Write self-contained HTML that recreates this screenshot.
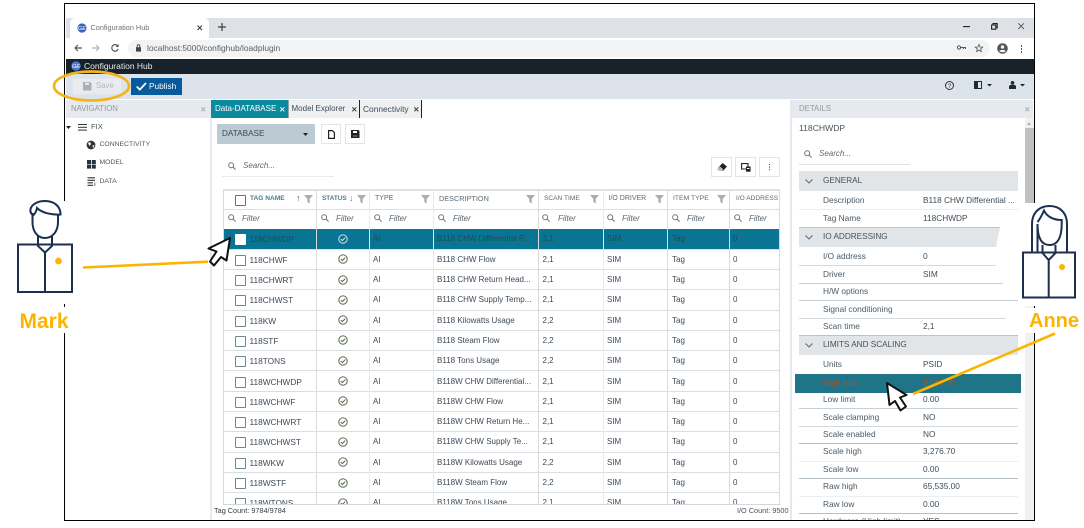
<!DOCTYPE html>
<html><head><meta charset="utf-8"><style>
html,body{margin:0;padding:0;background:#fff;width:1084px;height:528px;overflow:hidden}
body{position:relative;font-family:"Liberation Sans",sans-serif;color:#3b4650;filter:blur(.25px)}
.b{position:absolute}
.t{position:absolute;white-space:nowrap;font-size:8px;line-height:12px}
svg{position:absolute;overflow:visible}
#tbl{position:absolute;left:223px;top:189px;width:557px;height:315px;overflow:hidden;border-bottom:1px solid #d5d8db;box-sizing:content-box}
.r{position:absolute;left:0;width:557px;height:20.3px;border-bottom:1px solid #dcdfe2;box-sizing:border-box;font-size:8px;color:#3d4a57}
.r span{position:absolute;top:4px;line-height:12px;white-space:nowrap}
.r span:nth-child(1){left:12px;top:5px;width:9px;height:9px;border:1px solid #71858f;border-radius:1px;background:#fff}
.r span:nth-child(2){left:26.5px;font-size:8.3px}
.r span:nth-child(3){left:150px}
.r span:nth-child(4){left:214px}
.r span:nth-child(5){left:319.5px}
.r span:nth-child(6){left:384px}
.r span:nth-child(7){left:449px}
.r span:nth-child(8){left:510px}
.r svg{left:115px;top:4.5px}
.sel{background:#0a7592;color:#1f4a5c}
.v{position:absolute;top:0;bottom:0;width:1px;background:#d8dbde}
.h{position:absolute;font-size:7px;line-height:12px;top:5px;white-space:nowrap;color:#5b6a75}
.f{position:absolute;font-size:8px;font-style:italic;top:24px;line-height:12px;color:#5a6670}
.d{position:absolute;left:823px;font-size:8.3px;line-height:12px;color:#4a5a66;white-space:nowrap}
.e{position:absolute;left:923px;font-size:8.3px;line-height:12px;color:#3f4d58;white-space:nowrap}
.g{position:absolute;left:799px;width:219px;height:20px;background:#e2e5e8}
.gt{position:absolute;left:823px;font-size:8.2px;line-height:12px;color:#44525c;white-space:nowrap}
.l{position:absolute;left:799px;height:1px;background:#d3dbe1}
.bt{position:absolute;width:20px;height:20px;border:1px solid #e3e5e7;box-sizing:border-box;background:#fff}
</style></head><body>
<svg width="0" height="0" style="position:absolute"><defs>
<g id="chk"><circle cx="5" cy="5" r="4.2" fill="none" stroke="#4a5a3f" stroke-width=".9"/><path d="M2.8 5.1 4.4 6.6 7.2 3.6" fill="none" stroke="#4a5a3f" stroke-width=".9"/></g>
<g id="fn"><path d="M0 0H9L5.7 4V8.5L3.3 7V4Z" fill="#a8aeb2"/></g>
<g id="mg"><circle cx="3.2" cy="3.2" r="2.5" fill="none" stroke="#6c7880" stroke-width="1"/><path d="M5 5 7.6 7.6" stroke="#6c7880" stroke-width="1.1"/></g>
</defs></svg>

<!-- Frame -->
<div class="b" style="left:64px;top:3px;width:971px;height:518px;box-sizing:border-box;border:1.5px solid #000"></div>

<!-- Chrome tab bar -->
<div class="b" style="left:65.5px;top:18px;width:968px;height:20px;background:#dee1e6"></div>
<div class="b" style="left:70px;top:18px;width:139px;height:20px;background:#fff;border-radius:5px 5px 0 0"></div>
<svg style="left:77px;top:23px" width="10" height="10"><circle cx="5" cy="5" r="4.6" fill="#3a62c0"/><text x="5" y="7" font-size="5.5" fill="#fff" text-anchor="middle" font-style="italic">GE</text></svg>
<div class="t" style="left:90.5px;top:22px;font-size:7.3px;color:#6b7178">Configuration Hub</div>
<svg style="left:197px;top:25px" width="6" height="6"><path d="M.5.5 5 5M5 .5.5 5" stroke="#333" stroke-width="1"/></svg>
<svg style="left:218px;top:23px" width="8" height="8"><path d="M4 0V8M0 4H8" stroke="#444" stroke-width="1.3"/></svg>
<svg style="left:963px;top:26px" width="8" height="2"><path d="M0 .6H7" stroke="#222" stroke-width="1.1"/></svg>
<svg style="left:991px;top:23px" width="7" height="7"><path d="M.6 2H4.8V6.2H.6ZM2 2V.6H6.2V4.8H4.8" fill="none" stroke="#222" stroke-width="1.1"/></svg>
<svg style="left:1018px;top:23px" width="7" height="7"><path d="M.3.3 6 6M6 .3.3 6" stroke="#555" stroke-width=".9"/></svg>

<!-- Address bar -->
<div class="b" style="left:128px;top:40px;width:82px;height:17px;background:#f1f3f4;border-radius:9px 0 0 9px"></div>
<div class="b" style="left:200px;top:40px;width:790px;height:17px;background:#f1f3f4;border-radius:0 9px 9px 0"></div>
<svg style="left:74px;top:44px" width="9" height="8"><path d="M8 4H1M4 1 1 4 4 7" fill="none" stroke="#555" stroke-width="1.2"/></svg>
<svg style="left:92px;top:44px" width="9" height="8"><path d="M0 4H7M4 1 7 4 4 7" fill="none" stroke="#b0b4b8" stroke-width="1.2"/></svg>
<svg style="left:111px;top:44px" width="8" height="8"><path d="M6.8 2A3.3 3.3 0 1 0 7.2 5" fill="none" stroke="#555" stroke-width="1.2"/><path d="M7.6 0V3H4.6Z" fill="#555"/></svg>
<svg style="left:136px;top:44px" width="5" height="8"><path d="M1.2 3.4V2A1.3 1.3 0 0 1 3.8 2V3.4" fill="none" stroke="#444" stroke-width=".9"/><rect y="3.2" width="5" height="4.4" fill="#444"/></svg>
<div class="t" style="left:147px;top:42px;font-size:8.4px;color:#5a5f64">localhost:5000/confighub/loadplugin</div>
<svg style="left:957px;top:45px" width="9" height="6"><circle cx="2" cy="2.5" r="1.6" fill="none" stroke="#555" stroke-width="1"/><path d="M3.6 2.5H8.5V4M6.5 2.5V4" fill="none" stroke="#555" stroke-width="1"/></svg>
<svg style="left:975px;top:44px" width="8" height="8"><path d="M4 .4 5.1 3 7.7 3.2 5.7 4.9 6.3 7.5 4 6.1 1.7 7.5 2.3 4.9.3 3.2 2.9 3Z" fill="none" stroke="#555" stroke-width=".8"/></svg>
<svg style="left:997px;top:43px" width="11" height="11"><circle cx="5.5" cy="5.5" r="5.3" fill="#555"/><circle cx="5.5" cy="4" r="1.7" fill="#f1f3f4"/><path d="M2.2 8.3C3 6.4 8 6.4 8.8 8.3 7.5 9.6 3.5 9.6 2.2 8.3Z" fill="#f1f3f4"/></svg>
<div class="b" style="left:1020.5px;top:45px;width:1.5px;height:1.5px;background:#555;box-shadow:0 3px #555,0 6px #555"></div>

<!-- Dark bar -->
<div class="b" style="left:65.5px;top:59px;width:968px;height:15px;background:#18222a"></div>
<svg style="left:71px;top:60.5px" width="10" height="10"><circle cx="5" cy="5" r="4.7" fill="#4f79c9"/><text x="5" y="7" font-size="5.5" fill="#fff" text-anchor="middle" font-style="italic">GE</text></svg>
<div class="t" style="left:84px;top:60px;font-size:8.5px;color:#e4e8ea">Configuration Hub</div>

<!-- Toolbar -->
<div class="b" style="left:65.5px;top:74px;width:968px;height:25px;background:#dce3ea"></div>
<div class="b" style="left:72px;top:78px;width:50px;height:17px;background:#e8ecf0;border:1px solid #e0e5e9;box-sizing:border-box"></div>
<svg style="left:83px;top:82px" width="9" height="9"><path d="M0 0H7L8.5 1.5V8.5H0Z" fill="#a9afb4"/><rect x="2" y=".8" width="4" height="2" fill="#e8ecf0"/></svg>
<div class="t" style="left:96px;top:80px;font-size:7.8px;color:#b4babf">Save</div>
<div class="b" style="left:131px;top:78px;width:51px;height:17px;background:#075a9c"></div>
<svg style="left:136px;top:82px" width="11" height="9"><path d="M.7 4.5 3.8 7.6 10 1" fill="none" stroke="#fff" stroke-width="1.7"/></svg>
<div class="t" style="left:149px;top:80px;font-size:8.3px;color:#fff">Publish</div>
<svg style="left:945px;top:81px" width="9" height="9"><circle cx="4.5" cy="4.5" r="4" fill="none" stroke="#333" stroke-width="1"/><text x="4.5" y="6.8" font-size="6.5" fill="#333" text-anchor="middle">?</text></svg>
<svg style="left:974px;top:81px" width="18" height="9"><rect width="8" height="8" fill="#1f2a33"/><rect x="4" y="1" width="3" height="6" fill="#dce3ea"/><path d="M13 3H18L15.5 5.5Z" fill="#222"/></svg>
<svg style="left:1009px;top:81px" width="17" height="9"><circle cx="3.5" cy="1.8" r="1.8" fill="#1f2a33"/><path d="M0 8V6C0 4 1.5 3.8 3.5 3.8S7 4 7 6V8Z" fill="#1f2a33"/><path d="M11 3H16L13.5 5.5Z" fill="#222"/></svg>

<!-- Navigation panel -->
<div class="b" style="left:65.5px;top:100px;width:145px;height:18px;background:#e6e9ed"></div>
<div class="t" style="left:71px;top:103px;font-size:7.8px;color:#929aa1">NAVIGATION</div>
<svg style="left:201px;top:107px" width="5" height="5"><path d="M.3.3 4.3 4.3M4.3.3.3 4.3" stroke="#a0a6ab" stroke-width=".8"/></svg>
<div class="b" style="left:210px;top:118px;width:1.5px;height:402px;background:#e4e9ee"></div>
<svg style="left:66px;top:126px" width="5" height="3"><path d="M0 0H5L2.5 3Z" fill="#222"/></svg>
<div class="b" style="left:78px;top:124px;width:9px;height:1.4px;background:#333;box-shadow:0 2.8px #333,0 5.6px #333"></div>
<div class="t" style="left:91px;top:121px;font-size:7.6px;color:#4c5862">FIX</div>
<svg style="left:86px;top:140px" width="10" height="10"><circle cx="5" cy="5" r="4.4" fill="#333"/><path d="M2 3 4 2 5 4 3.5 6ZM6.5 5.5 8.5 5 7 8.5Z" fill="#fff"/></svg>
<div class="t" style="left:99.5px;top:139px;font-size:6.8px;color:#4c5862">CONNECTIVITY</div>
<div class="b" style="left:87px;top:160px;width:3.8px;height:3.5px;background:#27313a;box-shadow:4.8px 0 #27313a,0 4.6px #27313a,4.8px 4.6px #27313a"></div>
<div class="t" style="left:99.5px;top:157px;font-size:6.8px;color:#4c5862">MODEL</div>
<svg style="left:87px;top:177px" width="10" height="10"><path d="M.5.8H8M.5 3.3H8M.5 5.8H6M.5 8.3H6" stroke="#333" stroke-width="1.1" fill="none"/><path d="M7.8 5.5V9" stroke="#777" stroke-width="1"/></svg>
<div class="t" style="left:99.5px;top:176px;font-size:6.8px;color:#4c5862">DATA</div>

<!-- Tabs -->
<div class="b" style="left:211px;top:100px;width:210px;height:18px;background:#eef0f2"></div>
<div class="b" style="left:211px;top:100px;width:77px;height:18px;background:#0b8a9e"></div>
<div class="b" style="left:288px;top:100px;width:1px;height:18px;background:#95a3ab"></div>
<div class="b" style="left:359px;top:100px;width:1px;height:18px;background:#222"></div>
<div class="b" style="left:421px;top:100px;width:1px;height:18px;background:#222"></div>
<div class="t" style="left:215px;top:103px;font-size:8.05px;color:#fff">Data-DATABASE</div>
<svg style="left:280px;top:107px" width="5" height="5"><path d="M.3.3 4.3 4.3M4.3.3.3 4.3" stroke="#fff" stroke-width="1"/></svg>
<div class="t" style="left:291.5px;top:103px;font-size:8px;color:#3f4b55">Model Explorer</div>
<svg style="left:352px;top:107px" width="5" height="5"><path d="M.3.3 4.3 4.3M4.3.3.3 4.3" stroke="#333" stroke-width="1"/></svg>
<div class="t" style="left:363px;top:103px;font-size:8.4px;color:#3f4b55">Connectivity</div>
<svg style="left:414px;top:107px" width="5" height="5"><path d="M.3.3 4.3 4.3M4.3.3.3 4.3" stroke="#333" stroke-width="1"/></svg>

<!-- Main toolbar -->
<div class="b" style="left:217px;top:124px;width:98px;height:20px;background:#bccbd3"></div>
<div class="t" style="left:222px;top:128px;font-size:8.2px;color:#3f4a52">DATABASE</div>
<svg style="left:303px;top:133px" width="5" height="3"><path d="M0 0H5L2.5 3Z" fill="#222"/></svg>
<div class="bt" style="left:321px;top:124px"></div>
<svg style="left:328px;top:130px" width="7" height="9"><path d="M.6.6H4.4L6.4 2.6V8.4H.6Z" fill="#fff" stroke="#222" stroke-width="1.2"/></svg>
<div class="bt" style="left:345px;top:124px"></div>
<svg style="left:351px;top:130px" width="9" height="8"><path d="M0 0H7.5L8.5 1V8H0Z" fill="#222"/><rect x="2" y="1" width="4" height="2" fill="#fff"/><rect x="2" y="5" width="4.5" height="2" fill="#555"/></svg>
<svg style="left:228px;top:162px" width="8" height="8"><use href="#mg"/></svg>
<div class="t" style="left:243px;top:160px;font-size:8px;font-style:italic;color:#5f6b74">Search...</div>
<div class="b" style="left:222px;top:176px;width:112px;height:1px;background:#e8eaec"></div>
<div class="bt" style="left:711px;top:157px;width:21px"></div>
<svg style="left:717px;top:163px" width="10" height="9"><path d="M5.5 0 10 3.5 6 8 1 5Z" fill="#222"/><path d="M0 6 3 3.5 6.5 6.5 4.5 8H2Z" fill="#bbb"/></svg>
<div class="bt" style="left:735px;top:157px;width:21px"></div>
<svg style="left:741px;top:163px" width="10" height="9"><path d="M.6.6H7V6H.6Z" fill="none" stroke="#222" stroke-width="1.1"/><rect x="5" y="3.5" width="4.6" height="5.2" fill="#222"/><rect x="6" y="5" width="2.5" height="1" fill="#fff"/></svg>
<div class="bt" style="left:759px;top:157px;width:21px"></div>
<div class="b" style="left:769px;top:164px;width:1.2px;height:1.2px;background:#333;box-shadow:0 2.6px #333,0 5.2px #333"></div>

<!-- Table -->
<div id="tbl">
<div class="b" style="left:0;top:0;width:557px;height:2px;background:#dfe1e3"></div>
<div class="b" style="left:0;top:19.5px;width:557px;height:1px;background:#dcdfe2"></div>
<div class="b" style="left:0;top:39.5px;width:557px;height:1px;background:#dcdfe2"></div>
<div class="h" style="left:12px;top:6px;width:9px;height:9px;border:1px solid #5f7380;border-radius:1px"></div>
<div class="h" style="left:27px;top:4px;font-weight:bold;color:#4e7a90;font-size:6.6px">TAG NAME</div>
<div class="h" style="left:73px;top:3px;font-size:9px;color:#556">↑</div>
<svg style="left:81px;top:6px" width="9" height="9"><use href="#fn"/></svg>
<div class="h" style="left:99px;top:4px;font-weight:bold;color:#4e7a90;font-size:6.4px">STATUS</div>
<div class="h" style="left:126px;top:3px;font-size:9px;color:#777">↓</div>
<svg style="left:134px;top:6px" width="9" height="9"><use href="#fn"/></svg>
<div class="h" style="left:152px;top:4px">TYPE</div>
<svg style="left:198px;top:6px" width="9" height="9"><use href="#fn"/></svg>
<div class="h" style="left:216px;top:4px;font-size:7.3px">DESCRIPTION</div>
<svg style="left:303px;top:6px" width="9" height="9"><use href="#fn"/></svg>
<div class="h" style="left:321px;top:4px;font-size:6.6px">SCAN TIME</div>
<svg style="left:367px;top:6px" width="9" height="9"><use href="#fn"/></svg>
<div class="h" style="left:385.5px;top:4px;font-size:7px">I/O DRIVER</div>
<svg style="left:432px;top:6px" width="9" height="9"><use href="#fn"/></svg>
<div class="h" style="left:450px;top:4px;font-size:6.8px">ITEM TYPE</div>
<svg style="left:494px;top:6px" width="9" height="9"><use href="#fn"/></svg>
<div class="h" style="left:513px;top:4px;font-size:6.6px">I/O ADDRESS</div>

<svg style="left:5px;top:25px" width="8" height="8"><use href="#mg"/></svg><div class="f" style="left:19px">Filter</div>
<svg style="left:98px;top:25px" width="8" height="8"><use href="#mg"/></svg><div class="f" style="left:113px">Filter</div>
<svg style="left:151px;top:25px" width="8" height="8"><use href="#mg"/></svg><div class="f" style="left:166px">Filter</div>
<svg style="left:215px;top:25px" width="8" height="8"><use href="#mg"/></svg><div class="f" style="left:230px">Filter</div>
<svg style="left:319px;top:25px" width="8" height="8"><use href="#mg"/></svg><div class="f" style="left:335px">Filter</div>
<svg style="left:384px;top:25px" width="8" height="8"><use href="#mg"/></svg><div class="f" style="left:399px">Filter</div>
<svg style="left:449px;top:25px" width="8" height="8"><use href="#mg"/></svg><div class="f" style="left:464px">Filter</div>
<svg style="left:511px;top:25px" width="8" height="8"><use href="#mg"/></svg><div class="f" style="left:526px">Filter</div>

<div class="r sel" style="top:40.4px"><span style="border-color:#fff"></span><span>118CHWDP</span><span>AI</span><span>B118 CHW Differential P...</span><span>2,1</span><span>SIM</span><span>Tag</span><span>0</span><svg width="10" height="10"><circle cx="5" cy="5" r="4.2" fill="none" stroke="#dfeef2" stroke-width=".9"/><path d="M2.8 5.1 4.4 6.6 7.2 3.6" fill="none" stroke="#dfeef2" stroke-width=".9"/></svg></div>
<div class="r" style="top:60.7px"><span></span><span>118CHWF</span><span>AI</span><span>B118 CHW Flow</span><span>2,1</span><span>SIM</span><span>Tag</span><span>0</span><svg width="10" height="10"><use href="#chk"/></svg></div>
<div class="r" style="top:81px"><span></span><span>118CHWRT</span><span>AI</span><span>B118 CHW Return Head...</span><span>2,1</span><span>SIM</span><span>Tag</span><span>0</span><svg width="10" height="10"><use href="#chk"/></svg></div>
<div class="r" style="top:101.3px"><span></span><span>118CHWST</span><span>AI</span><span>B118 CHW Supply Temp...</span><span>2,1</span><span>SIM</span><span>Tag</span><span>0</span><svg width="10" height="10"><use href="#chk"/></svg></div>
<div class="r" style="top:121.6px"><span></span><span>118KW</span><span>AI</span><span>B118 Kilowatts Usage</span><span>2,2</span><span>SIM</span><span>Tag</span><span>0</span><svg width="10" height="10"><use href="#chk"/></svg></div>
<div class="r" style="top:141.9px"><span></span><span>118STF</span><span>AI</span><span>B118 Steam Flow</span><span>2,2</span><span>SIM</span><span>Tag</span><span>0</span><svg width="10" height="10"><use href="#chk"/></svg></div>
<div class="r" style="top:162.2px"><span></span><span>118TONS</span><span>AI</span><span>B118 Tons Usage</span><span>2,2</span><span>SIM</span><span>Tag</span><span>0</span><svg width="10" height="10"><use href="#chk"/></svg></div>
<div class="r" style="top:182.5px"><span></span><span>118WCHWDP</span><span>AI</span><span>B118W CHW Differential...</span><span>2,1</span><span>SIM</span><span>Tag</span><span>0</span><svg width="10" height="10"><use href="#chk"/></svg></div>
<div class="r" style="top:202.8px"><span></span><span>118WCHWF</span><span>AI</span><span>B118W CHW Flow</span><span>2,1</span><span>SIM</span><span>Tag</span><span>0</span><svg width="10" height="10"><use href="#chk"/></svg></div>
<div class="r" style="top:223.1px"><span></span><span>118WCHWRT</span><span>AI</span><span>B118W CHW Return He...</span><span>2,1</span><span>SIM</span><span>Tag</span><span>0</span><svg width="10" height="10"><use href="#chk"/></svg></div>
<div class="r" style="top:243.4px"><span></span><span>118WCHWST</span><span>AI</span><span>B118W CHW Supply Te...</span><span>2,1</span><span>SIM</span><span>Tag</span><span>0</span><svg width="10" height="10"><use href="#chk"/></svg></div>
<div class="r" style="top:263.7px"><span></span><span>118WKW</span><span>AI</span><span>B118W Kilowatts Usage</span><span>2,2</span><span>SIM</span><span>Tag</span><span>0</span><svg width="10" height="10"><use href="#chk"/></svg></div>
<div class="r" style="top:284px"><span></span><span>118WSTF</span><span>AI</span><span>B118W Steam Flow</span><span>2,2</span><span>SIM</span><span>Tag</span><span>0</span><svg width="10" height="10"><use href="#chk"/></svg></div>
<div class="r" style="top:304.3px"><span></span><span>118WTONS</span><span>AI</span><span>B118W Tons Usage</span><span>2,1</span><span>SIM</span><span>Tag</span><span>0</span><svg width="10" height="10"><use href="#chk"/></svg></div>

<div class="v" style="left:0"></div><div class="v" style="left:93px"></div><div class="v" style="left:146px;background:#e6e8ea"></div><div class="v" style="left:210px;background:#e6e8ea"></div><div class="v" style="left:315px"></div><div class="v" style="left:380px;background:#e9ebed"></div><div class="v" style="left:444px"></div><div class="v" style="left:506px"></div><div class="v" style="left:556px"></div>
</div>

<!-- Status -->
<div class="t" style="left:214px;top:505px;font-size:7.3px;color:#333d46">Tag Count: 9784/9784</div>
<div class="t" style="left:737px;top:505px;font-size:7.3px;color:#4d4f63">I/O Count: 9500</div>

<!-- Details -->
<div class="b" style="left:790px;top:100px;width:1.5px;height:420px;background:#e4e9ee"></div>
<div class="b" style="left:792px;top:100px;width:241px;height:18px;background:#e6e9ed"></div>
<div class="t" style="left:799px;top:103px;font-size:7.8px;color:#929aa1">DETAILS</div>
<svg style="left:1025px;top:107px" width="5" height="5"><path d="M.3.3 4.3 4.3M4.3.3.3 4.3" stroke="#a0a6ab" stroke-width=".8"/></svg>
<div class="t" style="left:799px;top:122px;font-size:8.6px;color:#48545e">118CHWDP</div>
<svg style="left:804px;top:150px" width="8" height="8"><use href="#mg"/></svg>
<div class="t" style="left:819px;top:148px;font-size:8px;font-style:italic;color:#5f6b74">Search...</div>
<div class="b" style="left:799px;top:164px;width:111px;height:1px;background:#dfe3e6"></div>
<div class="b" style="left:1025px;top:118px;width:8.5px;height:402px;background:#f1f1f1"></div>
<div class="b" style="left:1025px;top:128px;width:8.5px;height:75px;background:#c1c1c1"></div>
<svg style="left:1027px;top:122px" width="4" height="3"><path d="M0 3H4L2 0Z" fill="#b0b0b0"/></svg>

<div class="g" style="top:171px"></div>
<svg style="left:805px;top:179px" width="8" height="5"><path d="M.5.5 4 4 7.5.5" fill="none" stroke="#55616b" stroke-width=".9"/></svg>
<div class="gt" style="left:823px;top:175px">GENERAL</div>
<div class="d" style="top:194px">Description</div><div class="e" style="top:194px">B118 CHW Differential ...</div>
<div class="l" style="top:209px;width:219px;background:#eceff1"></div>
<div class="d" style="top:212px">Tag Name</div><div class="e" style="top:212px">118CHWDP</div>
<div class="b" style="left:799px;top:227px;height:20px;width:201px;background:#e2e5e8;clip-path:polygon(0 0,100% 0,98% 100%,0 100%);border-top:1px solid #b9c4cb;box-sizing:border-box"></div>
<svg style="left:805px;top:235px" width="8" height="5"><path d="M.5.5 4 4 7.5.5" fill="none" stroke="#55616b" stroke-width=".9"/></svg>
<div class="gt" style="top:231px">IO ADDRESSING</div>
<div class="d" style="top:250px">I/O address</div><div class="e" style="top:250px">0</div>
<div class="l" style="top:265px;width:197px"></div>
<div class="d" style="top:267.5px">Driver</div><div class="e" style="top:267.5px">SIM</div>
<div class="l" style="top:283px;width:204px;background:#c6d0d6"></div>
<div class="d" style="top:285px">H/W options</div>
<div class="l" style="top:300px;width:219px;background:#c6d0d6"></div>
<div class="d" style="top:303px">Signal conditioning</div>
<div class="l" style="top:318px;width:207px"></div>
<div class="d" style="top:320px">Scan time</div><div class="e" style="top:320px">2,1</div>
<div class="g" style="top:335px;border-top:1px solid #b9c4cb;box-sizing:border-box"></div>
<svg style="left:805px;top:343px" width="8" height="5"><path d="M.5.5 4 4 7.5.5" fill="none" stroke="#55616b" stroke-width=".9"/></svg>
<div class="gt" style="top:339px">LIMITS AND SCALING</div>
<div class="d" style="top:358px">Units</div><div class="e" style="top:358px">PSID</div>
<div class="b" style="left:795px;top:374px;width:226px;height:19px;background:#207488"></div>
<div class="d" style="top:377px;color:#b0501e">High limit</div><div class="e" style="top:377px;color:#b0501e">3,276.70</div>
<div class="d" style="top:393px">Low limit</div><div class="e" style="top:393px">0.00</div>
<div class="l" style="top:408px;width:219px;background:#c6d0d6"></div>
<div class="d" style="top:411px">Scale clamping</div><div class="e" style="top:411px">NO</div>
<div class="l" style="top:426px;width:219px"></div>
<div class="d" style="top:428px">Scale enabled</div><div class="e" style="top:428px">NO</div>
<div class="l" style="top:443px;width:219px;background:#b4c0c7"></div>
<div class="d" style="top:445px">Scale high</div><div class="e" style="top:445px">3,276.70</div>
<div class="l" style="top:461px;width:219px;background:#eceff1"></div>
<div class="d" style="top:463px">Scale low</div><div class="e" style="top:463px">0.00</div>
<div class="l" style="top:478px;width:219px;background:#b4c0c7"></div>
<div class="d" style="top:480px">Raw high</div><div class="e" style="top:480px">65,535.00</div>
<div class="l" style="top:496px;width:219px;background:#eceff1"></div>
<div class="d" style="top:498px">Raw low</div><div class="e" style="top:498px">0.00</div>
<div class="l" style="top:513px;width:219px;background:#b4c0c7"></div>
<div class="b" style="left:799px;top:514px;width:226px;height:6px;overflow:hidden"><div class="d" style="left:24px;top:1px">Hardware (High limit)</div><div class="e" style="left:124px;top:1px">YES</div></div>

<!-- Annotation covers -->
<div class="b" style="left:60px;top:201px;width:8px;height:103px;background:#fff"></div>
<div class="b" style="left:60px;top:307px;width:8px;height:26px;background:#fff"></div>
<div class="b" style="left:1025px;top:203px;width:12px;height:103px;background:#fff"></div>
<div class="b" style="left:1025px;top:308px;width:12px;height:25px;background:#fff"></div>

<!-- Annotations -->
<svg style="left:0;top:0" width="1084" height="528">
<ellipse cx="91.5" cy="86" rx="37.5" ry="14.5" fill="none" stroke="#f4b31a" stroke-width="2.7"/>
<path d="M83 267.5 208 261.7" stroke="#fbb400" stroke-width="2.6"/>
<path d="M1055 333.5 913 394" stroke="#fbb400" stroke-width="2.6"/>
<path d="M230 238 208.5 248.5 216.5 251.5 210 261.5 214 265.5 221 257 226.5 260.5Z" fill="#fff" stroke="#111" stroke-width="2" stroke-linejoin="round"/>
<path d="M887 383 906.5 395 900 397.5 906 406.5 900.5 410.5 895 401 889.5 405Z" fill="#fff" stroke="#111" stroke-width="2" stroke-linejoin="round"/>
<g fill="none" stroke="#1c2f4f" stroke-width="2">
<rect x="18" y="244.5" width="54" height="47.5"/>
<path d="M45 252.5V292M38 236V246L45 252.5 52 246V236"/>
<path d="M32.5 213V222C32.5 232 38 238 45 238S58 232 58 222V214"/>
<path d="M33.5 215C31 214 30 212 30.5 209 32 204 38 201 45 201 54 201 60.5 206 60.5 214.5 52 215 42 213 37 208 36.5 211 35.5 213 33.5 215Z"/>
<rect x="1023" y="252.5" width="52" height="45"/>
<path d="M1048.7 260V298M1042.5 245V253L1048.7 260 1055.5 253V245"/>
<path d="M1032 252V224C1032 213 1039 206 1049.5 206S1067 213 1067 224V252"/>
<path d="M1037.5 252V224C1037.5 240 1043 245 1049.5 245S1061.7 240 1061.7 224V220C1054 220 1047 217 1044 210.5 1042 215 1040 219 1037.5 222"/>
</g>
<circle cx="58.5" cy="261" r="3.4" fill="#fbb400"/>
<circle cx="1062" cy="267" r="3" fill="#fbb400"/>
<text x="19.5" y="328" font-family="Liberation Sans,sans-serif" font-weight="bold" font-size="21" fill="#fbb400">Mark</text>
<text x="1029" y="327" font-family="Liberation Sans,sans-serif" font-weight="bold" font-size="20" fill="#fbb400">Anne</text>
</svg>
</body></html>
